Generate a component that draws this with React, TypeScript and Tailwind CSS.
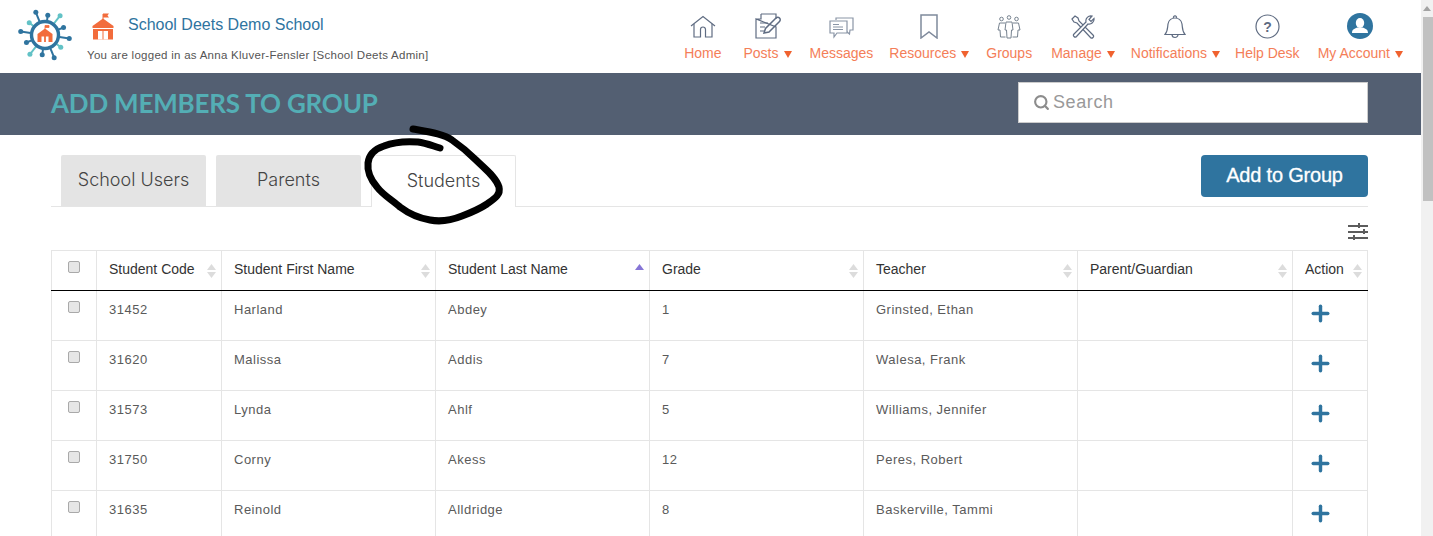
import { Search, Plus } from "lucide-react"

const rows = [
  ["31452", "Harland", "Abdey", "1", "Grinsted, Ethan"],
  ["31620", "Malissa", "Addis", "7", "Walesa, Frank"],
  ["31573", "Lynda", "Ahlf", "5", "Williams, Jennifer"],
  ["31750", "Corny", "Akess", "12", "Peres, Robert"],
  ["31635", "Reinold", "Alldridge", "8", "Baskerville, Tammi"],
]

const columns = [
  { label: "Student Code", width: "w-[125px]" },
  { label: "Student First Name", width: "w-[214px]" },
  { label: "Student Last Name", width: "w-[214px]", sorted: true },
  { label: "Grade", width: "w-[214px]" },
  { label: "Teacher", width: "w-[214px]" },
  { label: "Parent/Guardian", width: "w-[215px]" },
  { label: "Action", width: "w-[75px]" },
]

function Logo() {
  const spokes = [0, 30, 60, 90, 120, 150, 180, 210, 240, 270, 300, 330]
  return (
    <svg width="54" height="54" viewBox="0 0 54 54" className="shrink-0">
      {spokes.map((a, i) => {
        const long = i % 2 === 0 ? 24.5 : 20
        const r = ((a + 8) * Math.PI) / 180
        const color = i % 3 === 1 ? "#62c2c6" : "#2f749f"
        return (
          <g key={a}>
            <line x1={27 + 13 * Math.cos(r)} y1={27 + 13 * Math.sin(r)} x2={27 + long * Math.cos(r)} y2={27 + long * Math.sin(r)} stroke={color} strokeWidth="2" />
            <circle cx={27 + long * Math.cos(r)} cy={27 + long * Math.sin(r)} r="2.5" fill={color} />
          </g>
        )
      })}
      <circle cx="27" cy="27" r="13.5" fill="#fff" stroke="#2f749f" strokeWidth="3.4" />
      <path d="M27 17.5 V21 M27 17.5 H31 V19.5 H27" stroke="#f26c3c" strokeWidth="0.8" fill="#f26c3c" />
      <path d="M19.5 26 L27 20.5 L34.5 26 V34 H19.5 Z" fill="#f26c3c" />
      <rect x="23.5" y="28.5" width="2.6" height="5.5" fill="#fff" />
      <rect x="27.9" y="28.5" width="2.6" height="5.5" fill="#fff" />
    </svg>
  )
}

function SchoolIcon() {
  return (
    <svg width="22" height="27" viewBox="0 0 22 27" className="shrink-0">
      <path d="M11 1 V7" stroke="#f26c3c" strokeWidth="1" />
      <path d="M11 0.5 H17 L15.5 2.5 L17 4.5 H11 Z" fill="#f26c3c" />
      <path d="M11 5.5 L21.5 13 V15 H0.5 V13 Z" fill="#f26c3c" />
      <path d="M1 16 H21 V26.5 H1 Z" fill="#f26c3c" />
      <rect x="6" y="18" width="4.5" height="8.5" fill="#fff" />
      <rect x="11.5" y="18" width="4.5" height="8.5" fill="#fff" />
    </svg>
  )
}

const stroke = { fill: "none", stroke: "#5f6c82", strokeWidth: 1.2 }

const icons: Record<string, React.ReactNode> = {
  Home: (
    <svg width="26" height="24" viewBox="0 0 26 24" {...stroke}>
      <path d="M1 11 L13 1.5 L25 11" />
      <path d="M4 9 V22 H10.5 V14.5 A2.5 2.5 0 0 1 15.5 14.5 V22 H22 V9" />
    </svg>
  ),
  Posts: (
    <svg width="26" height="26" viewBox="0 0 26 26" {...stroke}>
      <path d="M6 1 H21 V6 M21 14 V25 H1 V6 Z M6 1 V6 H1" />
      <path d="M5 10 H13 M5 14 H10 M5 18 H9" />
      <path d="M9 20 L10.5 15.5 L21 5 A2 2 0 0 1 24.5 8.5 L14 19 Z" strokeWidth="1.5" />
    </svg>
  ),
  Messages: (
    <svg width="25" height="23" viewBox="0 0 25 23" {...stroke} stroke="#8a95a6">
      <path d="M7 4 V2 H24 V14 H21 L20.5 18 L17 15" />
      <path d="M1 5 H18 V17 H8 L5 21 V17 H1 Z" fill="#fff" />
      <path d="M4 8.5 H10 M4 11 H14 M4 13.5 H14" />
    </svg>
  ),
  Resources: (
    <svg width="18" height="25" viewBox="0 0 18 25" {...stroke} strokeWidth={1.5} stroke="#7f8a9c">
      <path d="M1 1 H17 V24 L9 18 L1 24 Z" />
    </svg>
  ),
  Groups: (
    <svg width="24" height="24" viewBox="0 0 24 24" {...stroke} strokeWidth={1} stroke="#76828f">
      <circle cx="12" cy="2.5" r="1.8" />
      <circle cx="4.5" cy="4" r="1.8" />
      <circle cx="19.5" cy="4" r="1.8" />
      <path d="M9 7 H15 L16 15 H14.5 L14 23 H10 L9.5 15 H8 Z" />
      <path d="M8 8 H2.5 L1 15 H3 L3.5 22 H8.5 M16 8 H21.5 L23 15 H21 L20.5 22 H15.5" />
    </svg>
  ),
  Manage: (
    <svg width="24" height="24" viewBox="0 0 24 24" {...stroke}>
      <path d="M1 4 L4 1 L7 3 L8 6 L22 20 A1.5 1.5 0 0 1 19.5 22.5 L6 8 L3 7 Z" />
      <path d="M3 19 L15 7 A5 5 0 0 1 21 1 L18 4.5 L20 6.5 L23 3.5 A5 5 0 0 1 17 9 L5.5 21.5 A1.7 1.7 0 0 1 3 19 Z" fill="#fff" />
    </svg>
  ),
  Notifications: (
    <svg width="22" height="25" viewBox="0 0 22 25" {...stroke}>
      <path d="M1 20.5 C4 17 3.5 13 4 10 C4.7 6 8 4 11 4 C14 4 17.3 6 18 10 C18.5 13 18 17 21 20.5 Z" />
      <path d="M9.5 4 A1.6 1.6 0 1 1 12.5 4 M8 20.5 A3 3 0 0 0 14 20.5" />
    </svg>
  ),
  "Help Desk": (
    <svg width="25" height="25" viewBox="0 0 25 25" {...stroke}>
      <circle cx="12.5" cy="12.5" r="11.5" />
      <text x="12.5" y="17.5" textAnchor="middle" fontSize="14" fontWeight="700" fontFamily="Liberation Sans, sans-serif" fill="#5f6c82" stroke="none">?</text>
    </svg>
  ),
  "My Account": (
    <svg width="26" height="26" viewBox="0 0 26 26">
      <circle cx="13" cy="13" r="13" fill="#2f749f" />
      <ellipse cx="13" cy="10" rx="4.2" ry="5" fill="#fff" />
      <path d="M5 20 C5 16 8 15.5 10.5 14.5 H15.5 C18 15.5 21 16 21 20 Z" fill="#fff" />
    </svg>
  ),
}

const navItems = [
  { label: "Home", spacing: "mr-[22px]" },
  { label: "Posts", caret: true, spacing: "mr-[18px]" },
  { label: "Messages", spacing: "mr-[16px]" },
  { label: "Resources", caret: true, spacing: "mr-[17px]" },
  { label: "Groups", spacing: "mr-[19px]" },
  { label: "Manage", caret: true, spacing: "mr-[16px]" },
  { label: "Notifications", caret: true, spacing: "mr-[15px]" },
  { label: "Help Desk", spacing: "mr-[18px]" },
  { label: "My Account", caret: true },
]

function NavItem({ label, caret, spacing }: { label: string; caret?: boolean; spacing?: string }) {
  return (
    <div className={`flex flex-col items-center ${spacing ?? ""}`}>
      <div className="h-[29px] flex items-end justify-center">{icons[label]}</div>
      <div className="mt-[4px] flex items-center text-[14px] leading-[20px] text-[#f47e58]">
        {label}
        {caret && <span className="ml-[5px] w-0 h-0 mt-[2px] border-x-[4px] border-x-transparent border-t-[7px] border-t-[#f0622f]" />}
      </div>
    </div>
  )
}

function SortArrows({ sorted }: { sorted?: boolean }) {
  return (
    <svg width="9" height="14" viewBox="0 0 9 14" className="shrink-0 mt-[3px]">
      <path d="M4.5 0 L9 6 H0 Z" fill={sorted ? "#8675d6" : "#dcdcdc"} />
      {!sorted && <path d="M0 8 H9 L4.5 14 Z" fill="#dcdcdc" />}
    </svg>
  )
}

function Checkbox() {
  return <input type="checkbox" className="block appearance-none w-[12px] h-[12px] rounded-[2px] border border-[#a9a9a9] bg-[#e6e6e6]" />
}

export default function App() {
  return (
    <div className="h-[536px] w-full overflow-hidden flex bg-white font-['Liberation_Sans',sans-serif]">
      <div className="relative w-[1421px] shrink-0">
        <header className="h-[73px] flex justify-between pl-[18px] pr-[18px]">
          <div className="flex items-start pt-[8px]">
            <Logo />
            <div className="ml-[15px]">
              <div className="flex items-start pt-[5px] pl-[5px]">
                <SchoolIcon />
                <span className="ml-[14px] text-[16px] leading-[24px] text-[#2f749f]">School Deets Demo School</span>
              </div>
              <div className="mt-[8px] text-[11.5px] leading-[14px] tracking-[0.27px] text-[#555]">
                You are logged in as Anna Kluver-Fensler [School Deets Admin]
              </div>
            </div>
          </div>
          <nav className="flex pt-[10px]">
            {navItems.map((item) => (
              <NavItem key={item.label} label={item.label} caret={item.caret} spacing={item.spacing} />
            ))}
          </nav>
        </header>

        <div className="h-[62px] bg-[#535f72] flex items-center justify-between pl-[51px] pr-[53px]">
          <h1 className="mb-[2px] font-['Lato',sans-serif] font-bold text-[26px] text-[#54aeb5] tracking-[-0.2px]">ADD MEMBERS TO GROUP</h1>
          <div className="mb-[4px] w-[350px] h-[41px] bg-white border border-[#ccc] flex items-center pl-[14px]">
            <Search size={17} strokeWidth={3} className="text-[#8c8c8c]" />
            <span className="ml-[3px] text-[18px] tracking-[0.6px] text-[#999]">Search</span>
          </div>
        </div>

        <div className="pl-[51px] pr-[53px] pt-[20px]">
          <div className="flex justify-between border-b border-[#e5e5e5] h-[52px]">
            <div className="flex gap-[10px] pl-[10px] font-['Inter',sans-serif] font-light text-[18px] text-[#444]">
              <div className="w-[145px] h-[51px] pb-[2px] rounded-t-[2px] bg-[#e4e4e4] flex items-center justify-center">School Users</div>
              <div className="w-[145px] h-[51px] pb-[2px] rounded-t-[2px] bg-[#e4e4e4] flex items-center justify-center">Parents</div>
              <div className="w-[145px] h-[52px] pb-[3px] rounded-t-[2px] bg-white border border-b-0 border-[#e5e5e5] flex items-center justify-center">Students</div>
            </div>
            <button className="w-[167px] h-[42px] pb-[2px] rounded-[4px] bg-[#2f749f] text-white text-[20px] tracking-[-0.2px] [-webkit-text-stroke:0.3px_white]">Add to Group</button>
          </div>

          <div className="h-[43px] flex justify-end items-start pt-[16px]">
            <svg width="20" height="17" viewBox="0 0 20 17" fill="#5c5c5c">
              <rect x="0" y="2" width="20" height="2" />
              <rect x="10" y="0" width="2" height="5" />
              <rect x="0" y="8" width="20" height="2" />
              <rect x="15" y="6" width="2" height="5" />
              <rect x="0" y="14" width="20" height="2" />
              <rect x="5" y="12" width="2" height="5" />
            </svg>
          </div>

          <table className="w-[1316px] table-fixed border-collapse">
            <thead>
              <tr className="h-[40px] border-b border-b-black">
                <th className="w-[45px] border border-[#e5e5e5] border-b-black px-[16px] align-top pt-[10px] font-normal">
                  <Checkbox />
                </th>
                {columns.map((col) => (
                  <th key={col.label} className={`${col.width} border border-[#e5e5e5] border-b-black pl-[12px] pr-[5px] align-top pt-[8px] font-normal text-left`}>
                    <div className="flex items-center justify-between text-[14px] leading-[20px] text-[#333]">
                      {col.label}
                      <SortArrows sorted={col.sorted} />
                    </div>
                  </th>
                ))}
              </tr>
            </thead>
            <tbody>
              {rows.map((row) => (
                <tr key={row[0]} className="h-[50px]">
                  <td className="border border-[#e5e5e5] px-[16px] align-top pt-[10px]">
                    <Checkbox />
                  </td>
                  {row.map((cell, i) => (
                    <td key={i} className="border border-[#e5e5e5] pl-[12px] align-top pt-[10px] text-[13px] leading-[18px] tracking-[0.5px] text-[#5a5a5a]">
                      {cell}
                    </td>
                  ))}
                  <td className="border border-[#e5e5e5]"></td>
                  <td className="border border-[#e5e5e5] pl-[15px] align-top pt-[10px]">
                    <Plus size={25} strokeWidth={3.3} className="text-[#2f749f]" />
                  </td>
                </tr>
              ))}
            </tbody>
          </table>
        </div>

        {/* hand drawn circle on top of the Students tab */}
        <svg className="absolute left-[355px] top-[120px] pointer-events-none" width="160" height="110" viewBox="355 120 160 110" fill="none">
          <path
            d="M413 129 C430 132 444 134 452 140 C462 147 468 152 476 160 C485 169 496 177 499 187 C501 195 494 199 487 204 C478 210 470 213 462 216 C452 220 440 222 430 220 C418 218 408 213 400 207 C392 200 383 195 377 187 C371 180 367 172 368 163 C369 154 375 149 384 146 C394 142 405 141 418 142 C426 143 433 146 440 148"
            stroke="#000"
            strokeWidth="7"
            strokeLinecap="round"
            strokeLinejoin="round"
          />
        </svg>
      </div>

      {/* page scrollbar */}
      <div className="flex-1 bg-[#f1f1f1] flex flex-col">
        <div className="h-[17px] flex items-center justify-center">
          <span className="w-0 h-0 border-x-[4px] border-x-transparent border-b-[5px] border-b-[#a3a3a3]" />
        </div>
        <div className="ml-[2px] h-[184px] bg-[#c1c1c1]" />
      </div>
    </div>
  )
}
